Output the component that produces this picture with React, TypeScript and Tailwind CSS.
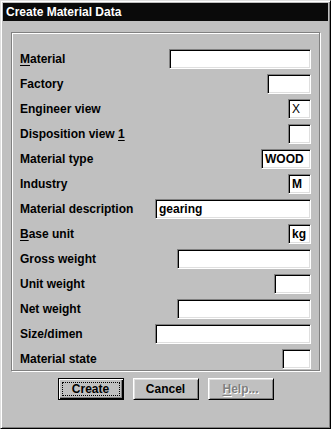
import React from "react";

const fields = [
  { label: "Material", key: "M", rest: "aterial", width: "w-[142px]", value: "" },
  { label: "Factory", width: "w-[44px]", value: "" },
  { label: "Engineer view", width: "w-[23px]", value: "X", thin: true },
  { label: "Disposition view ", tail: "1", width: "w-[23px]", value: "" },
  { label: "Material type", width: "w-[50px]", value: "WOOD" },
  { label: "Industry", width: "w-[23px]", value: "M" },
  { label: "Material description", width: "w-[156px]", value: "gearing" },
  { label: "Base unit", key: "B", rest: "ase unit", width: "w-[23px]", value: "kg" },
  { label: "Gross weight", width: "w-[134px]", value: "" },
  { label: "Unit weight", width: "w-[37px]", value: "" },
  { label: "Net weight", width: "w-[134px]", value: "" },
  { label: "Size/dimen", width: "w-[156px]", value: "" },
  { label: "Material state", width: "w-[29px]", value: "" },
];

function Label({ f }: { f: (typeof fields)[number] }) {
  if (f.key) {
    return (
      <span>
        <span className="underline underline-offset-2">{f.key}</span>
        {f.rest}
      </span>
    );
  }
  return (
    <span>
      {f.label}
      {f.tail && <span className="underline underline-offset-2">{f.tail}</span>}
    </span>
  );
}

export default function App() {
  return (
    <div className="w-[331px] h-[429px] bg-[#c0c0c0] border border-[#dfdfdf] border-r-black border-b-black shadow-[inset_1px_1px_#fff,inset_-1px_-1px_#808080] p-[2px] font-['Liberation_Sans',Arial,sans-serif] text-[12px] font-bold text-black">
      <div className="h-[18px] bg-[#0a0a0a] text-white flex items-center pl-[3px] leading-none">
        Create Material Data
      </div>

      <div className="mt-[11px] mx-[8px] border border-[#808080] shadow-[inset_1px_1px_#fff,1px_1px_#fff] pt-4 pl-2 pr-2 pb-[1px]">
        <div className="flex flex-col gap-[5px]">
          {fields.map((f) => (
            <div key={f.label} className="h-5 flex items-center justify-between">
              <Label f={f} />
              <div
                className={`${f.width} h-5 bg-white border border-[#808080] border-r-white border-b-white shadow-[inset_1px_1px_#000,inset_-1px_-1px_#dfdfdf] flex items-center pl-[3px] leading-none ${
                  f.thin ? "font-normal" : ""
                }`}
              >
                {f.value}
              </div>
            </div>
          ))}
        </div>
      </div>

      <div className="mt-[7px] flex justify-center gap-[9px]">
        <button className="w-[66px] h-[22px] border border-black shadow-[inset_1px_1px_#fff,inset_-1px_-1px_#000,inset_-2px_-2px_#808080] p-[3px] flex">
          <span className="flex-1 border border-dotted border-black flex items-center justify-center leading-none">
            Create
          </span>
        </button>
        <button className="w-[66px] h-[22px] border border-white border-r-black border-b-black shadow-[inset_1px_1px_#dfdfdf,inset_-1px_-1px_#808080] flex items-center justify-center leading-none">
          Cancel
        </button>
        <button className="w-[66px] h-[22px] border border-white border-r-black border-b-black shadow-[inset_1px_1px_#dfdfdf,inset_-1px_-1px_#808080] flex items-center justify-center leading-none text-[#808080] [text-shadow:1px_1px_0_#fff]">
          <span>
            <span className="underline underline-offset-2">H</span>elp...
          </span>
        </button>
      </div>
    </div>
  );
}
